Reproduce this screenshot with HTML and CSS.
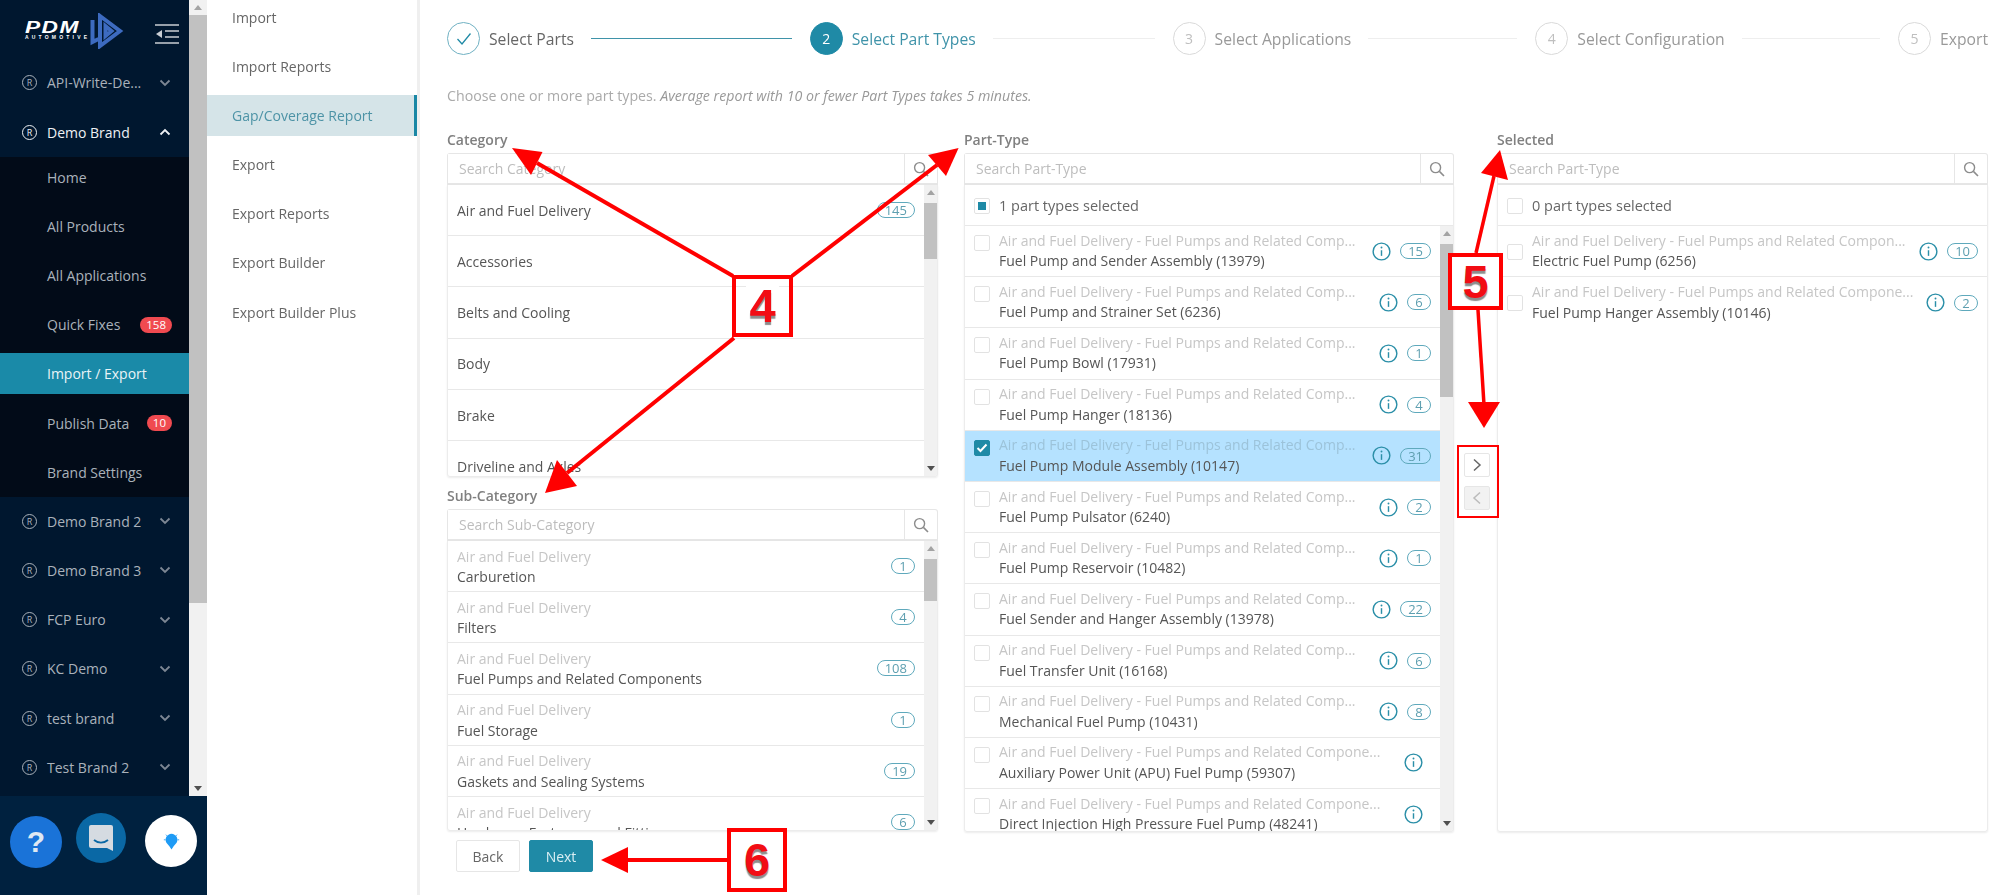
FILE: index.html
```html
<!DOCTYPE html>
<html lang="en">
<head>
    <meta charset="UTF-8">
    <meta name="viewport" content="width=device-width, initial-scale=1.0">
    <title>Gap/Coverage Report</title>
    <link rel="stylesheet" href="styles.css">
</head>
<body>
    <svg class="sprite" width="0" height="0">
        <symbol id="chev" viewBox="0 0 12 8"><path d="M1.5 1.5 6 6l4.5-4.5" fill="none" stroke="currentColor" stroke-width="1.8"/></symbol>
        <symbol id="info" viewBox="0 0 20 20"><circle cx="10" cy="10" r="8.8" fill="none" stroke="#2b8fa8" stroke-width="1.5"/><path d="M10 8.6v6" stroke="#2b8fa8" stroke-width="1.5"/><circle cx="10" cy="5.8" r="1" fill="#2b8fa8"/></symbol>
        <symbol id="search" viewBox="0 0 16 16"><circle cx="6.6" cy="6.6" r="5" fill="none" stroke="#8c8c8c" stroke-width="1.4"/><path d="m10.4 10.4 4.6 4.6" stroke="#8c8c8c" stroke-width="1.6"/></symbol>
    </svg>

    <aside class="sidebar">
        <div class="sidebar-top">
            <nav class="nav">
                <div class="logo-row">
                    <div class="logo-text">
                        <div class="logo-pdm">PDM</div>
                        <div class="logo-sub">AUTOMOTIVE</div>
                    </div>
                    <svg class="logo-mark" viewBox="0 0 34 36" width="34" height="36">
                        <path d="M2.500 7v22l6-3M10 3l20 15-20 15zM15.500 13l6 5-6 5z" fill="none" stroke="#3d6bc0" stroke-width="4"/>
                    </svg>
                    <svg class="menu-icon" viewBox="0 0 24 20" width="24" height="20">
                        <path d="M0 1h24M10 7h14M10 13h14M0 19h24" stroke="#c9ced4" stroke-width="1.6"/>
                        <path d="M7 6v8l-6-4z" fill="#c9ced4"/>
                    </svg>
                </div>
                <div class="brand"><span class="reg">R</span><span>API-Write-De...</span><svg class="chev"><use href="#chev"/></svg></div>
                <div class="brand brand-open"><span class="reg">R</span><span>Demo Brand</span><svg class="chev chev-up"><use href="#chev"/></svg></div>
                <div class="sub">
                    <div class="sub-item">Home</div>
                    <div class="sub-item">All Products</div>
                    <div class="sub-item">All Applications</div>
                    <div class="sub-item">Quick Fixes<span class="pill">158</span></div>
                    <div class="sub-item sub-active">Import / Export</div>
                    <div class="sub-item">Publish Data<span class="pill">10</span></div>
                    <div class="sub-item">Brand Settings</div>
                </div>
                <div class="brand"><span class="reg">R</span><span>Demo Brand 2</span><svg class="chev"><use href="#chev"/></svg></div>
                <div class="brand"><span class="reg">R</span><span>Demo Brand 3</span><svg class="chev"><use href="#chev"/></svg></div>
                <div class="brand"><span class="reg">R</span><span>FCP Euro</span><svg class="chev"><use href="#chev"/></svg></div>
                <div class="brand"><span class="reg">R</span><span>KC Demo</span><svg class="chev"><use href="#chev"/></svg></div>
                <div class="brand"><span class="reg">R</span><span>test brand</span><svg class="chev"><use href="#chev"/></svg></div>
                <div class="brand"><span class="reg">R</span><span>Test Brand 2</span><svg class="chev"><use href="#chev"/></svg></div>
            </nav>
            <div class="scroll scroll-nav"><i class="up"></i><div class="track"><div class="thumb"></div></div><i class="down"></i></div>
        </div>
        <div class="sidebar-foot">
            <div class="fab fab-help">?</div>
            <div class="fab fab-chat">
                <svg viewBox="0 0 26 28" width="26" height="28"><path d="M3 1h20a2 2 0 0 1 2 2v24l-6-3H3a2 2 0 0 1-2-2V3a2 2 0 0 1 2-2z" fill="#d5dbe1"/><path d="M6 16c4 3.4 10 3.4 14 0" fill="none" stroke="#0a68a5" stroke-width="1.8"/></svg>
            </div>
            <div class="fab fab-tip">
                <svg viewBox="0 0 20 22" width="17" height="19"><path d="M10 2a7 7 0 0 0-6 10.500l3.500 4 2.500 4 2.500-4 3.500-4A7 7 0 0 0 10 2z" fill="#1e9bf5"/><path d="M1 9H3M17 9h2M3.500 3l1.500 1.500M16.500 3 15 4.500" stroke="#1e9bf5" stroke-width="1"/></svg>
            </div>
        </div>
    </aside>

    <div class="subnav">
        <div class="subnav-item">Import</div>
        <div class="subnav-item">Import Reports</div>
        <div class="subnav-item subnav-active">Gap/Coverage Report</div>
        <div class="subnav-item">Export</div>
        <div class="subnav-item">Export Reports</div>
        <div class="subnav-item">Export Builder</div>
        <div class="subnav-item">Export Builder Plus</div>
    </div>

    <main class="main">
        <div class="steps">
            <div class="step">
                <span class="dot dot-done"><svg viewBox="0 0 16 14" width="16" height="14"><path d="m1.500 7 4.500 5 8.500-10.500" fill="none" stroke="#1f8aa6" stroke-width="1.300"/></svg></span>
                <span class="step-title">Select Parts</span><span class="tail tail-done"></span>
            </div>
            <div class="step">
                <span class="dot dot-now">2</span>
                <span class="step-title title-now">Select Part Types</span><span class="tail"></span>
            </div>
            <div class="step">
                <span class="dot">3</span>
                <span class="step-title title-off">Select Applications</span><span class="tail"></span>
            </div>
            <div class="step">
                <span class="dot">4</span>
                <span class="step-title title-off">Select Configuration</span><span class="tail"></span>
            </div>
            <div class="step step-last">
                <span class="dot">5</span>
                <span class="step-title title-off">Export</span>
            </div>
        </div>

        <p class="hint">Choose one or more part types. <em>Average report with 10 or fewer Part Types takes 5 minutes.</em></p>

        <div class="columns">
            <div class="col">
                <div class="label">Category</div>
                <div class="search"><input type="text" placeholder="Search Category"><span class="search-btn"><svg width="16" height="16"><use href="#search"/></svg></span></div>
                <div class="panel panel-cat">
                    <div class="rows">
                        <div class="row"><div class="name">Air and Fuel Delivery</div><span class="count">145</span></div>
                        <div class="row"><div class="name">Accessories</div></div>
                        <div class="row"><div class="name">Belts and Cooling</div></div>
                        <div class="row"><div class="name">Body</div></div>
                        <div class="row"><div class="name">Brake</div></div>
                        <div class="row"><div class="name">Driveline and Axles</div></div>
                    </div>
                    <div class="scroll"><i class="up"></i><div class="track track-cat"><div class="thumb"></div></div><i class="down"></i></div>
                </div>

                <div class="label label-sub">Sub-Category</div>
                <div class="search"><input type="text" placeholder="Search Sub-Category"><span class="search-btn"><svg width="16" height="16"><use href="#search"/></svg></span></div>
                <div class="panel panel-subcat">
                    <div class="rows">
                        <div class="row"><div class="row-text"><div class="cat">Air and Fuel Delivery</div><div class="name">Carburetion</div></div><span class="count">1</span></div>
                        <div class="row"><div class="row-text"><div class="cat">Air and Fuel Delivery</div><div class="name">Filters</div></div><span class="count">4</span></div>
                        <div class="row"><div class="row-text"><div class="cat">Air and Fuel Delivery</div><div class="name">Fuel Pumps and Related Components</div></div><span class="count">108</span></div>
                        <div class="row"><div class="row-text"><div class="cat">Air and Fuel Delivery</div><div class="name">Fuel Storage</div></div><span class="count">1</span></div>
                        <div class="row"><div class="row-text"><div class="cat">Air and Fuel Delivery</div><div class="name">Gaskets and Sealing Systems</div></div><span class="count">19</span></div>
                        <div class="row"><div class="row-text"><div class="cat">Air and Fuel Delivery</div><div class="name">Hardware, Fasteners and Fittings</div></div><span class="count">6</span></div>
                    </div>
                    <div class="scroll"><i class="up"></i><div class="track track-subcat"><div class="thumb"></div></div><i class="down"></i></div>
                </div>

                <div class="buttons">
                    <button class="btn" type="button">Back</button>
                    <button class="btn btn-next" type="button">Next</button>
                </div>
            </div>

            <div class="col col-mid">
                <div class="label">Part-Type</div>
                <div class="search"><input type="text" placeholder="Search Part-Type"><span class="search-btn"><svg width="16" height="16"><use href="#search"/></svg></span></div>
                <div class="panel panel-tall">
                    <div class="picked"><span class="check check-some"></span>1 part types selected</div>
                    <div class="panel-body">
                        <div class="rows">
                            <div class="row"><span class="check"></span><div class="row-text"><div class="cat">Air and Fuel Delivery - Fuel Pumps and Related Comp...</div><div class="name">Fuel Pump and Sender Assembly (13979)</div></div><svg class="info"><use href="#info"/></svg><span class="count">15</span></div>
                            <div class="row"><span class="check"></span><div class="row-text"><div class="cat">Air and Fuel Delivery - Fuel Pumps and Related Comp...</div><div class="name">Fuel Pump and Strainer Set (6236)</div></div><svg class="info"><use href="#info"/></svg><span class="count">6</span></div>
                            <div class="row"><span class="check"></span><div class="row-text"><div class="cat">Air and Fuel Delivery - Fuel Pumps and Related Comp...</div><div class="name">Fuel Pump Bowl (17931)</div></div><svg class="info"><use href="#info"/></svg><span class="count">1</span></div>
                            <div class="row"><span class="check"></span><div class="row-text"><div class="cat">Air and Fuel Delivery - Fuel Pumps and Related Comp...</div><div class="name">Fuel Pump Hanger (18136)</div></div><svg class="info"><use href="#info"/></svg><span class="count">4</span></div>
                            <div class="row row-on"><span class="check check-on"><svg viewBox="0 0 16 16" width="16" height="16"><path d="m3.500 8 3 3 6-6.500" fill="none" stroke="#fff" stroke-width="2"/></svg></span><div class="row-text"><div class="cat">Air and Fuel Delivery - Fuel Pumps and Related Comp...</div><div class="name">Fuel Pump Module Assembly (10147)</div></div><svg class="info"><use href="#info"/></svg><span class="count">31</span></div>
                            <div class="row"><span class="check"></span><div class="row-text"><div class="cat">Air and Fuel Delivery - Fuel Pumps and Related Comp...</div><div class="name">Fuel Pump Pulsator (6240)</div></div><svg class="info"><use href="#info"/></svg><span class="count">2</span></div>
                            <div class="row"><span class="check"></span><div class="row-text"><div class="cat">Air and Fuel Delivery - Fuel Pumps and Related Comp...</div><div class="name">Fuel Pump Reservoir (10482)</div></div><svg class="info"><use href="#info"/></svg><span class="count">1</span></div>
                            <div class="row"><span class="check"></span><div class="row-text"><div class="cat">Air and Fuel Delivery - Fuel Pumps and Related Comp...</div><div class="name">Fuel Sender and Hanger Assembly (13978)</div></div><svg class="info"><use href="#info"/></svg><span class="count">22</span></div>
                            <div class="row"><span class="check"></span><div class="row-text"><div class="cat">Air and Fuel Delivery - Fuel Pumps and Related Comp...</div><div class="name">Fuel Transfer Unit (16168)</div></div><svg class="info"><use href="#info"/></svg><span class="count">6</span></div>
                            <div class="row"><span class="check"></span><div class="row-text"><div class="cat">Air and Fuel Delivery - Fuel Pumps and Related Comp...</div><div class="name">Mechanical Fuel Pump (10431)</div></div><svg class="info"><use href="#info"/></svg><span class="count">8</span></div>
                            <div class="row"><span class="check"></span><div class="row-text"><div class="cat">Air and Fuel Delivery - Fuel Pumps and Related Compone...</div><div class="name">Auxiliary Power Unit (APU) Fuel Pump (59307)</div></div><svg class="info info-solo"><use href="#info"/></svg></div>
                            <div class="row"><span class="check"></span><div class="row-text"><div class="cat">Air and Fuel Delivery - Fuel Pumps and Related Compone...</div><div class="name">Direct Injection High Pressure Fuel Pump (48241)</div></div><svg class="info info-solo"><use href="#info"/></svg></div>
                        </div>
                        <div class="scroll"><i class="up"></i><div class="track track-part"><div class="thumb"></div></div><i class="down"></i></div>
                    </div>
                </div>
            </div>

            <div class="move">
                <button class="move-btn" type="button"><svg viewBox="0 0 10 14" width="10" height="14"><path d="m2 1.500 6 5.500-6 5.500" fill="none" stroke="#666" stroke-width="1.500"/></svg></button>
                <button class="move-btn move-off" type="button"><svg viewBox="0 0 10 14" width="10" height="14"><path d="M8 1.500 2 7l6 5.500" fill="none" stroke="#bbb" stroke-width="1.500"/></svg></button>
            </div>

            <div class="col">
                <div class="label">Selected</div>
                <div class="search"><input type="text" placeholder="Search Part-Type"><span class="search-btn"><svg width="16" height="16"><use href="#search"/></svg></span></div>
                <div class="panel panel-tall">
                    <div class="picked"><span class="check"></span>0 part types selected</div>
                    <div class="rows rows-chosen">
                        <div class="row"><span class="check"></span><div class="row-text"><div class="cat">Air and Fuel Delivery - Fuel Pumps and Related Compon...</div><div class="name">Electric Fuel Pump (6256)</div></div><svg class="info"><use href="#info"/></svg><span class="count">10</span></div>
                        <div class="row row-last"><span class="check"></span><div class="row-text"><div class="cat">Air and Fuel Delivery - Fuel Pumps and Related Compone...</div><div class="name">Fuel Pump Hanger Assembly (10146)</div></div><svg class="info"><use href="#info"/></svg><span class="count">2</span></div>
                    </div>
                </div>
            </div>
        </div>
    </main>

    <!-- red help marks drawn over the screen -->
    <svg class="marks" width="2012" height="895" viewBox="0 0 2012 895">
        <g stroke="#ff0000" stroke-width="4" fill="none">
            <path d="M733 276 537 163"/>
            <path d="M792 276 937 165"/>
            <path d="M734 338 567 473"/>
            <path d="M1476 253 1494 176" stroke-width="3.500"/>
            <path d="M1478 310 1484 405" stroke-width="3.500"/>
            <path d="M727 860H622"/>
            <rect x="1458" y="446" width="40" height="71" stroke-width="2"/>
        </g>
        <g fill="#ff0000">
            <path d="M512 148 542.500 152 531 175z"/>
            <path d="M958.600 148 928 155 946 176z"/>
            <path d="M545 493 577 486 557 460z"/>
            <path d="M1500 150 1481 173 1508 180z"/>
            <path d="M1484 428 1468 402H1500z"/>
            <path d="M601 860 628 847V873z"/>
        </g>
    </svg>
    <div class="callout callout-4"><span>4</span></div>
    <div class="callout callout-5"><span>5</span></div>
    <div class="callout callout-6"><span>6</span></div>
</body>
</html>
```

FILE: styles.css
```css
* {
    box-sizing: border-box;
}

html, body {
    margin: 0;
    height: 895px;
    overflow: hidden;
}

body {
    display: flex;
    position: relative;
    font-family: "Open Sans", sans-serif;
    font-size: 14px;
    color: #555;
    background-color: #fff;
    filter: blur(0.4px);
}

.sprite {
    position: absolute;
}

/* left dark menu */
.sidebar {
    width: 207px;
    height: 895px;
    flex: none;
    display: flex;
    flex-direction: column;
}

.sidebar-top {
    height: 796px;
    display: flex;
    overflow: hidden;
}

.nav {
    width: 189px;
    flex: none;
    display: flex;
    flex-direction: column;
    gap: 8.2px;
    background-color: #00172f;
    color: #aab2bb;
}

.logo-row {
    height: 54.3px;
    flex: none;
    display: flex;
    align-items: flex-start;
    padding-left: 25px;
}

.logo-text {
    width: 65px;
    padding-top: 21px;
    color: #fff;
}

.logo-pdm {
    font-family: "Liberation Sans", sans-serif;
    font-weight: 700;
    font-style: italic;
    font-size: 16px;
    line-height: 13px;
    letter-spacing: 1px;
    transform: scaleX(1.42);
    transform-origin: left;
}

.logo-sub {
    font-family: "Liberation Sans", sans-serif;
    font-size: 5px;
    line-height: 7px;
    font-weight: 700;
    letter-spacing: 3.2px;
    white-space: nowrap;
}

.logo-mark {
    margin-top: 13px;
}

.menu-icon {
    margin: 24px 0 0 31px;
}

.brand {
    height: 41px;
    flex: none;
    display: flex;
    align-items: center;
    padding: 0 18px 0 22px;
}

.brand-open {
    color: #eef1f4;
}

.reg {
    width: 15px;
    height: 15px;
    margin-right: 10px;
    border: 1px solid currentColor;
    border-radius: 50%;
    font-size: 9px;
    line-height: 13px;
    text-align: center;
    flex: none;
}

.chev {
    width: 12px;
    height: 8px;
    margin-left: auto;
    color: #7d8794;
}

.chev-up {
    transform: rotate(180deg);
    color: #eef1f4;
}

.sub {
    margin: -4.200px 0;
    padding-bottom: 4px;
    display: flex;
    flex-direction: column;
    gap: 8.200px;
    background-color: #020b18;
}

.sub-item {
    height: 41px;
    display: flex;
    align-items: center;
    padding: 0 17px 0 47px;
}

.sub-active {
    background-color: #1a8aa8;
    color: #eaf4f7;
}

.pill {
    margin-left: auto;
    padding: 0 6px;
    height: 16px;
    border-radius: 8px;
    background-color: #f04a50;
    color: #fff;
    font-size: 11.500px;
    line-height: 16px;
}

.sidebar-foot {
    height: 99px;
    display: flex;
    align-items: flex-start;
    background-color: #00213f;
    padding: 20px 0 0 10px;
}

.fab {
    width: 52px;
    height: 52px;
    border-radius: 50%;
    display: flex;
    align-items: center;
    justify-content: center;
    flex: none;
}

.fab-help {
    background-color: #1a73d8;
    color: #dfe8f2;
    font-family: "Liberation Sans", sans-serif;
    font-weight: 700;
    font-size: 30px;
}

.fab-chat {
    width: 50px;
    height: 50px;
    margin: -3px 0 0 14px;
    background-color: #0a68a5;
}

.fab-tip {
    margin: -1px 0 0 19px;
    background-color: #fff;
}

/* fake browser scrollbars */
.scroll {
    width: 13px;
    flex: none;
    display: flex;
    flex-direction: column;
    background-color: #f1f1f1;
}

.scroll-nav {
    width: 18px;
}

.scroll i {
    display: block;
    height: 15px;
    flex: none;
    position: relative;
}

.scroll i::after {
    content: '';
    position: absolute;
    left: calc(50% - 4px);
    top: 5px;
    border: 4px solid transparent;
    border-top: 0;
    border-bottom: 5px solid #a3a3a3;
}

.scroll .down::after {
    border-bottom: 0;
    border-top: 5px solid #505050;
}

.track {
    flex: 1;
}

.thumb {
    background-color: #c1c1c1;
}

.scroll-nav .thumb {
    height: 588px;
}

.track-cat, .track-subcat, .track-part {
    padding-top: 3px;
}

.track-cat .thumb {
    height: 56px;
}

.track-subcat .thumb {
    height: 42px;
}

.track-part .thumb {
    height: 153px;
}

/* second column menu */
.subnav {
    width: 213px;
    flex: none;
    height: 900px;
    border-right: 3px solid #efefef;
    display: flex;
    flex-direction: column;
    gap: 8.200px;
    margin-top: -3.500px;
    color: #666;
}

.subnav-item {
    height: 41px;
    flex: none;
    display: flex;
    align-items: center;
    padding-left: 25px;
}

.subnav-active {
    background-color: #d5e4e8;
    color: #4d93a6;
    border-right: 3px solid #1a87a5;
}

/* main area */
.main {
    flex: 1;
    min-width: 0;
    padding: 22px 24px 0 27px;
}

.steps {
    display: flex;
    height: 33px;
}

.step {
    flex: 1;
    display: flex;
    align-items: center;
}

.step-last {
    flex: none;
}

.dot {
    width: 33px;
    height: 33px;
    flex: none;
    border: 1px solid #d9d9d9;
    border-radius: 50%;
    display: flex;
    align-items: center;
    justify-content: center;
    font-size: 14px;
    color: #bfbfbf;
}

.dot-done {
    border-color: #6fb0c2;
}

.dot-now {
    border-color: #1f8aa6;
    background-color: #1f8aa6;
    color: #fff;
}

.step-title {
    margin-left: 9px;
    font-size: 15.700px;
    white-space: nowrap;
    color: #666;
}

.title-now {
    color: #3f93a9;
}

.title-off {
    color: #999;
}

.tail {
    flex: 1;
    height: 1px;
    margin: 0 18px 0 17px;
    background-color: #eee;
}

.tail-done {
    background-color: #3f93a9;
}

.hint {
    margin: 31px 0 0;
    line-height: 20px;
    font-size: 14.200px;
    color: #aaa;
}

.hint em {
    color: #999;
}

.columns {
    display: flex;
    margin-top: 23px;
}

.col {
    width: 491px;
    flex: none;
}

.col-mid {
    width: 490px;
    margin-left: 26px;
}

.label {
    height: 24px;
    line-height: 22px;
    font-weight: 600;
    color: #808080;
}

.label-sub {
    margin-top: 8px;
}

.search {
    height: 32px;
    display: flex;
    border: 1px solid #e6e6e6;
    border-bottom-width: 2px;
    border-radius: 3px 3px 0 0;
}

.search input {
    flex: 1;
    min-width: 0;
    border: 0;
    outline: 0;
    padding: 0 0 0 11px;
    font-family: inherit;
    font-size: 14px;
    color: #555;
}

.search input::placeholder {
    color: #bdbdbd;
    opacity: 1;
}

.search-btn {
    width: 33px;
    flex: none;
    border-left: 1px solid #e6e6e6;
    display: flex;
    align-items: center;
    justify-content: center;
}

.panel {
    display: flex;
    border: 1px solid #ececec;
    border-top: 0;
    border-radius: 0 0 3px 3px;
    box-shadow: 0 1px 2px rgba(0, 0, 0, 0.08);
    overflow: hidden;
}

.panel-cat {
    height: 292px;
}

.panel-subcat {
    height: 290px;
}

.panel-subcat .row-text {
    padding-top: 2px;
}

.panel-tall {
    height: 647px;
    flex-direction: column;
}

.panel-body {
    flex: 1;
    min-height: 0;
    display: flex;
}

.rows {
    flex: 1;
    min-width: 0;
}

.picked {
    height: 41px;
    flex: none;
    display: flex;
    align-items: center;
    padding: 1px 0 0 9px;
    border-bottom: 1px solid #e8e8e8;
    font-size: 14.500px;
    color: #666;
}

.row {
    height: 51.200px;
    display: flex;
    align-items: center;
    padding-right: 9px;
    padding-left: 9px;
    border-bottom: 1px solid #e8e8e8;
    line-height: 20.500px;
}

.row > .name {
    padding-top: 2px;
}

.row-last {
    border-bottom: 0;
}

.row-on {
    background-color: #b5e2ff;
}

.row-text {
    flex: 1;
    min-width: 0;
}

.check {
    width: 16px;
    height: 16px;
    flex: none;
    align-self: flex-start;
    margin: 9px 9px 0 0;
    border: 1px solid #e2e2e2;
    border-radius: 2px;
    background-color: #fff;
    display: block;
}

.picked .check {
    align-self: center;
    margin-top: 0;
}

.rows-chosen .check {
    margin-top: 18px;
}

.check-some {
    padding: 3px;
    background-clip: content-box;
    background-color: #1f8aa6;
}

.check-on {
    border-color: #1f8aa6;
    background-color: #1f8aa6;
}

.check-on svg {
    display: block;
    margin: -1px;
}

.cat {
    color: #c6c6c6;
    white-space: nowrap;
}

.row-on .cat {
    color: #9cc3da;
}

.name {
    color: #555;
    white-space: nowrap;
}

.info {
    width: 19px;
    height: 19px;
    flex: none;
    margin-left: 6px;
}

.info-solo {
    margin-right: 8px;
}

.count {
    min-width: 24px;
    height: 16px;
    margin-left: 9px;
    padding: 0 7px;
    flex: none;
    border: 1px solid #5fa9bc;
    border-radius: 8px;
    font-size: 13px;
    line-height: 14px;
    text-align: center;
    color: #5e9fb0;
}

.row > .name + .count, .row-text + .count {
    margin-left: auto;
}

.buttons {
    display: flex;
    gap: 9px;
    padding: 9px 0 0 9px;
}

.btn {
    width: 64px;
    height: 32px;
    border: 1px solid #e6e6e6;
    border-radius: 2px;
    background-color: #fff;
    font-family: inherit;
    font-size: 14px;
    color: #666;
}

.btn-next {
    border-color: #1f8aa6;
    background-color: #1f8aa6;
    color: #d9eef3;
}

.move {
    width: 43px;
    flex: none;
    display: flex;
    flex-direction: column;
    gap: 9px;
    padding: 324px 0 0 10px;
}

.move-btn {
    width: 26px;
    height: 24px;
    padding: 0;
    border: 1px solid #e6e6e6;
    border-radius: 2px;
    background-color: #fff;
    display: flex;
    align-items: center;
    justify-content: center;
}

.move-off {
    background-color: #f2f2f2;
}

/* help marks on top of the screen */
.marks {
    position: absolute;
    left: 0;
    top: 0;
    pointer-events: none;
}

.callout {
    position: absolute;
    border: 4px solid #ff0000;
    display: flex;
    align-items: center;
    justify-content: center;
    font-family: "Liberation Sans", sans-serif;
    font-weight: 700;
    font-size: 47px;
    color: #f20d14;
    text-shadow: 0 3px 1px rgba(0, 0, 0, 0.45);
}

.callout span {
    background-color: #fff;
    line-height: 44px;
    padding: 0 3px;
}

.callout-4 {
    left: 732px;
    top: 275px;
    width: 61px;
    height: 62px;
}

.callout-5, .callout-6 {
    background-color: #fff;
}

.callout-5 {
    left: 1448px;
    top: 253px;
    width: 55px;
    height: 57px;
}

.callout-6 {
    left: 727px;
    top: 828px;
    width: 60px;
    height: 64px;
}
```
